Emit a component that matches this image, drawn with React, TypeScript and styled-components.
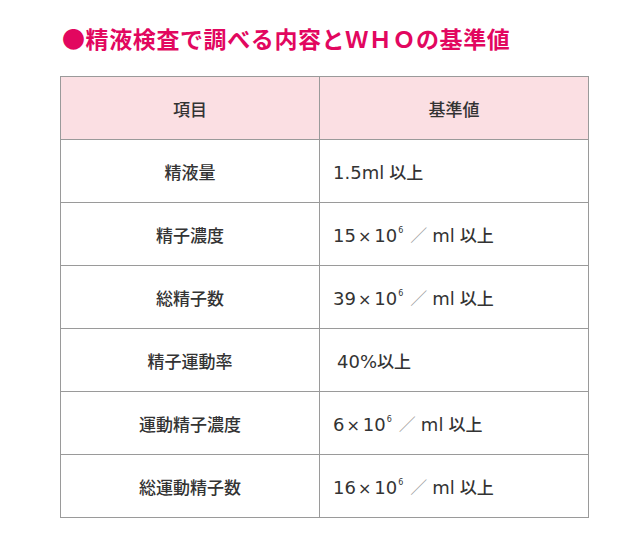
import styled, { createGlobalStyle } from "styled-components";

const GlobalStyle = createGlobalStyle`
  html, body {
    margin: 0;
    padding: 0;
    background: #ffffff;
  }
  body {
    font-family: "Noto Sans CJK JP", "Noto Sans", sans-serif;
    color: #333333;
  }
`;

const Page = styled.div`
  width: 640px;
  height: 541px;
  padding: 22px 0 0 60px;
  box-sizing: border-box;
`;

const Title = styled.h2`
  margin: 0 0 21px 2px;
  height: 33px;
  line-height: 33px;
  font-size: 23px;
  font-weight: 700;
  color: #e2075f;
  letter-spacing: 0.6px;
  white-space: nowrap;
`;

const Table = styled.table`
  width: 529px;
  border-collapse: collapse;
  table-layout: fixed;
  font-size: 17px;

  td,
  th {
    border: 1px solid #9a9a9a;
    height: 63px;
    padding: 0;
    box-sizing: border-box;
  }
  td:first-child,
  th:first-child {
    width: 259px;
  }
`;

const HeadCell = styled.th`
  background: #fbdfe3;
  font-weight: 500;
  color: #333333;
  text-align: center;
`;

const NameCell = styled.td`
  text-align: center;
  font-weight: 500;
  color: #333333;
`;

const ValueCell = styled.td`
  text-align: left;
  padding-left: 13px !important;
  color: #333333;
  font-family: "DejaVu Sans", "Noto Sans CJK JP", sans-serif;
  font-size: 18px;
  white-space: nowrap;

  sup {
    font-size: 8px;
    vertical-align: 9px;
    line-height: 0;
    margin-left: 1px;
  }
`;

const Jp = styled.span<{ $gap?: number }>`
  font-family: "Noto Sans CJK JP", sans-serif;
  font-size: 17px;
  font-weight: 500;
  margin-left: ${(p) => (p.$gap ?? 5)}px;
`;

const Times = styled.span`
  font-size: 16px;
  margin: 0 3px 0 2px;
`;

const Slash = styled.span`
  color: #9a9a9a;
  font-family: "Noto Sans CJK JP", sans-serif;
  font-size: 17px;
  font-weight: 300;
  margin: 0 5px 0 7px;
`;

const Indent = styled.span`
  padding-left: 4px;
`;

function Power({ base }: { base: string }) {
  return (
    <>
      {base}
      <Times>×</Times>10<sup>6</sup>
      <Slash>／</Slash>ml<Jp>以上</Jp>
    </>
  );
}

function App() {
  const rows = [
    {
      name: "精液量",
      value: (
        <>
          1.5ml<Jp>以上</Jp>
        </>
      ),
    },
    { name: "精子濃度", value: <Power base="15" /> },
    { name: "総精子数", value: <Power base="39" /> },
    {
      name: "精子運動率",
      value: (
        <Indent>
          40%<Jp $gap={0}>以上</Jp>
        </Indent>
      ),
    },
    { name: "運動精子濃度", value: <Power base="6" /> },
    { name: "総運動精子数", value: <Power base="16" /> },
  ];

  return (
    <Page>
      <GlobalStyle />
      <Title>●精液検査で調べる内容とＷＨＯの基準値</Title>
      <Table>
        <thead>
          <tr>
            <HeadCell>項目</HeadCell>
            <HeadCell>基準値</HeadCell>
          </tr>
        </thead>
        <tbody>
          {rows.map((r) => (
            <tr key={r.name}>
              <NameCell>{r.name}</NameCell>
              <ValueCell>{r.value}</ValueCell>
            </tr>
          ))}
        </tbody>
      </Table>
    </Page>
  );
}
export default App;
